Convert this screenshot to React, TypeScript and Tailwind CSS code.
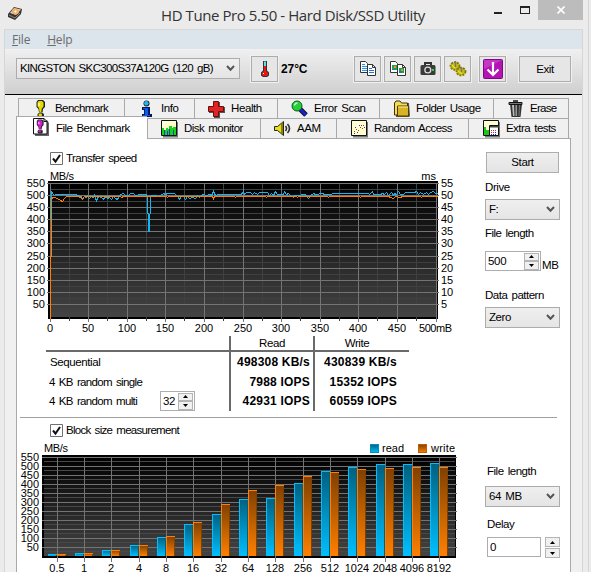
import type { ReactNode } from 'react'
import clsx from 'clsx'

const READ_LINE =
  '50,219 50,204 51,191 53,194 54,195 55,194 76,194 77,196 78,195 79,197 81,196 82,199 84,196 86,197 87,195 89,198 91,196 93,197 94,195 95,198 96,200 98,196 101,197 103,199 104,197 106,196 107,198 109,197 111,199 113,196 115,198 117,199 118,197 120,194 123,193 125,195 128,195 130,193 133,193 135,195 140,194 146,194 147,197 147,213 148,213 148,231 149,231 149,214 150,213 150,197 151,195 155,195 158,196 160,195 163,193 165,194 167,193 174,193 176,195 178,197 179,199 181,196 183,196 185,199 187,196 189,198 192,197 195,198 197,195 199,197 201,195 203,194 206,195 209,194 211,195 213,191 215,195 218,194 224,194 227,194 240,194 242,193 243,191 244,194 246,192 250,192 252,194 254,192 257,194 259,192 267,192 269,195 271,193 273,195 275,191 277,194 280,194 283,194 284,191 286,194 288,193 290,195 293,197 294,195 299,195 302,194 304,194 306,195 308,198 310,195 313,193 315,194 322,193 324,194 340,193 368,193 369,194 372,191 373,194 380,194 382,193 384,194 386,192 388,195 391,192 393,195 394,193 396,194 398,191 400,194 403,194 405,192 414,192 416,191 418,194 420,192 423,194 426,192 428,194 430,192 433,191 435,193 437,193'

const WRITE_LINE =
  '50,318 50,256 51,256 51,199 52,197 55,197 60,200 62,201 64,198 66,196 80,196 82,199 84,196 120,196 121,197 123,196 166,196 167,197 168,196 212,196 213,198 214,196 234,196 235,197 236,196 265,196 266,197 267,196 296,196 297,197 298,196 327,196 328,197 329,196 359,196 360,197 361,196 388,196 390,197 393,198 395,196 400,197 402,196 420,196 421,197 422,196 437,196'

const Y1 = [183, 195, 207, 219, 231, 243, 256, 268, 280, 292, 304]
const X1 = [50, 88, 127, 165, 204, 243, 281, 320, 358, 397, 436]

// [block size, x centre, top of the read bar, top of the write bar]
const BLOCKS: [string, number, number, number][] = [
  ['0.5', 57, 554, 554],
  ['1', 84, 553, 553],
  ['2', 111, 550, 550],
  ['4', 139, 545, 545],
  ['8', 166, 537, 536],
  ['16', 193, 524, 522],
  ['32', 221, 514, 504],
  ['64', 248, 499, 490],
  ['128', 275, 498, 485],
  ['256', 303, 483, 476],
  ['512', 330, 471, 472],
  ['1024', 357, 467, 469],
  ['2048', 385, 464, 468],
  ['4096', 412, 464, 467],
  ['8192', 439, 463, 467],
]

const RESULTS = [
  { label: 'Sequential', read: '498308 KB/s', write: '430839 KB/s' },
  { label: '4 KB random single', read: '7988 IOPS', write: '15352 IOPS' },
  { label: '4 KB random multi', read: '42931 IOPS', write: '60559 IOPS' },
]

function Icon({ children, size = 18 }: { children: ReactNode; size?: number }) {
  return (
    <svg width={size} height={size} viewBox="0 0 18 18" className="shrink-0">
      {children}
    </svg>
  )
}

function Bang({ color }: { color: string }) {
  return (
    <>
      <path d="M6 0h5l2 2v5l-2 2-.5 3.500H7L6.500 9l-2-2V2z" fill="#222" />
      <path d="M6.500 1H10l1.500 1.500v4l-1.700 2-.5 3.500H7.500L7 8 5.500 6.500v-4z" fill={color} />
      <path d="M6 3h2v3H6z" fill="#fff" opacity=".55" />
      <rect x="5.500" y="13" width="6.500" height="4.500" rx="1.800" fill="#222" />
      <rect x="6.500" y="13.500" width="3.500" height="2.500" rx="1" fill={color} />
    </>
  )
}

const icons = {
  benchmark: (
    <Icon>
      <Bang color="#e6dc00" />
    </Icon>
  ),
  info: (
    <Icon>
      <path d="M4 7h8v7h2v3H4v-3h2v-4H4z" fill="#001a55" />
      <path d="M5 8h5v7h2v1H5v-1h2V9H5V8z" fill="#0a5cf0" />
      <circle cx="8.500" cy="3.500" r="3" fill="#123" />
      <circle cx="8.300" cy="3.300" r="2.200" fill="#27b4e8" />
    </Icon>
  ),
  health: (
    <Icon>
      <path d="M6 2h6v5h5v6h-5v5H6v-5H1V7h5z" fill="#555" />
      <path d="M5.500 1.500h5v5h5v5h-5v5h-5v-5h-5v-5h5z" fill="#e02424" stroke="#6b0d0d" />
    </Icon>
  ),
  scan: (
    <Icon>
      <path d="M9 9l6 6" stroke="#111" strokeWidth="5" />
      <path d="M9 9l6 6" stroke="#1822d8" strokeWidth="3" />
      <circle cx="6" cy="6" r="5" fill="#25cf3c" stroke="#0c5c18" />
      <path d="M3.500 5.500a3 3 0 0 1 3-2.500" stroke="#baffc0" strokeWidth="1.500" fill="none" />
    </Icon>
  ),
  folder: (
    <Icon>
      <path d="M3 3h13l1 13-1 1H3z" fill="#555" />
      <path d="M1.500 15V3l1.500-2h4l1.500 2h6v12z" fill="#f7dc5c" stroke="#3d3200" />
      <path d="M4.500 6h11v10h-11z" fill="#d8b324" stroke="#4d3f00" />
      <path d="M5 7h10" stroke="#fff2a0" />
    </Icon>
  ),
  erase: (
    <Icon>
      <path d="M3 4h12l-1.500 13h-9z" fill="#333" />
      <path d="M5 5h2l.5 11H6z" fill="#bbb" />
      <path d="M8.500 5h1.500v11H8.500z" fill="#999" />
      <path d="M12 5h1l-.5 11h-1z" fill="#777" />
      <path d="M2 2.500h13v2H2z" fill="#777" stroke="#111" />
      <path d="M6 1h5" stroke="#111" strokeWidth="1.500" />
    </Icon>
  ),
  fileBench: (
    <Icon>
      <path d="M2 2h12l2 3v13H2z" fill="#666" />
      <path d="M.5.500h10.500l3 3v12.500H.5z" fill="#fff" stroke="#111" />
      <path d="M11 .500v3h3" fill="none" stroke="#111" />
      <g transform="translate(.2 1.500) scale(.8)">
        <Bang color="#d61ad6" />
      </g>
    </Icon>
  ),
  disk: (
    <Icon>
      <path d="M2 2h15v15.500H2z" fill="#777" />
      <path d="M.5.500h15v15H.5z" fill="#ffffcf" stroke="#111" />
      <path d="M1 8h2v2h2V8h2v1h1V6h3v2h1V7h3v8H1z" fill="#18d418" />
      <path d="M3 10h1v5H3zM6 11h1v4H6zM8 9h1v6H8zM12 10h1v5h-1z" fill="#2338d8" />
    </Icon>
  ),
  aam: (
    <Icon>
      <path d="M.5 6.500h3l6-5v14l-6-5h-3z" fill="#e8de19" stroke="#222" />
      <path d="M7 4v9l2 1.500V2z" fill="#8c8400" />
      <path d="M11.500 6q2 2.500 0 5M13.500 4q4 4.500 0 9" fill="none" stroke="#333" strokeWidth="1.600" />
    </Icon>
  ),
  random: (
    <Icon>
      <path d="M2 2h15v15.500H2z" fill="#777" />
      <path d="M.5.500h15v15H.5z" fill="#ffffcf" stroke="#111" />
      <path d="M3 11h1v1H3zM5 9h1v1H5zM7 10h1v1H7zM9 7h1v1H9zM11 8h1v1h-1zM12 5h1v1h-1z" fill="#e02222" />
      <path d="M3 13h1v1H3zM6 12h1v1H6zM8 5h1v1H8zM10 5h1v1h-1zM4 7h1v1H4zM13 7h1v1h-1z" fill="#2430d8" />
    </Icon>
  ),
  extra: (
    <Icon>
      <path d="M2 2h15v15.500H2z" fill="#777" />
      <path d="M.5.500h15v15H.5z" fill="#ffffcf" stroke="#111" />
      <path d="M1 7h2v3h3v5H1z" fill="#18c818" />
      <path d="M6.500 5.500h9v10h-9z" fill="#fff" stroke="#111" />
      <path d="M7 6h9v1.500H7z" fill="#444" />
      <path d="M8 10h1v1H8zM10 10h1v1h-1zM12 10h1v1h-1zM8 12h1v1H8zM10 12h1v1h-1z" fill="#d22" />
      <path d="M12 12h1v1h-1zM8 14h1v1H8zM10 14h1v1h-1zM12 14h1v1h-1z" fill="#22d" />
    </Icon>
  ),
  thermo: (
    <Icon>
      <path d="M7 1h4v9.500l2 2v3L11 17H7l-2-1.500v-3l2-2z" fill="#333" />
      <path d="M8 1.500h2V6H8z" fill="#5fe0ee" />
      <path d="M8 6h2v5l2 2v2l-1.500 1h-3L6 15v-2l2-2z" fill="#e81818" />
      <path d="M7 13h1v1H7z" fill="#fff" />
    </Icon>
  ),
  copy: (
    <Icon>
      <path d="M1.500 1.500h5l2 2v9h-7z" fill="#fff" stroke="#333" />
      <path d="M3 4.500h3M3 6.500h5M3 8.500h5M3 10.500h5" stroke="#2a96e8" />
      <path d="M8.500 4.500h5l3 3v8h-8z" fill="#fff" stroke="#333" />
      <path d="M13.500 4.500v3h3" fill="none" stroke="#333" />
      <path d="M10 8.500h3M10 10.500h5M10 12.500h5" stroke="#2a6fd8" />
    </Icon>
  ),
  copyImage: (
    <Icon>
      <path d="M1.500 1.500h5l2 2v9h-7z" fill="#fff" stroke="#333" />
      <path d="M3 5h5v5H3z" fill="#18a848" />
      <path d="M8.500 4.500h5l3 3v8h-8z" fill="#fff" stroke="#333" />
      <path d="M13.500 4.500v3h3" fill="none" stroke="#333" />
      <path d="M10 8h5v5h-5z" fill="#12a048" />
      <path d="M5 6h2v2H5zM12 9h2v2h-2z" fill="#ff8a1c" />
      <path d="M3 9h3v1H3zM10 11h2v2h-2z" fill="#1e6be0" />
    </Icon>
  ),
  camera: (
    <Icon>
      <path d="M6 5V3h6v2" fill="none" stroke="#333" strokeWidth="2" />
      <rect x="1.500" y="5" width="15" height="10" rx="1.500" fill="#3b3b3b" />
      <circle cx="8.800" cy="10" r="3.600" fill="#ddd" />
      <circle cx="8.800" cy="10" r="2.300" fill="#333" />
      <rect x="13" y="9" width="2" height="2" fill="#2fd83a" />
    </Icon>
  ),
  settings: (
    <Icon>
      <ellipse cx="6" cy="6" rx="4.500" ry="3.800" fill="#c9bd12" stroke="#827900" strokeWidth="1.800" strokeDasharray="2 1" />
      <ellipse cx="12" cy="11.500" rx="4.500" ry="3.800" fill="#c9bd12" stroke="#827900" strokeWidth="1.800" strokeDasharray="2 1" />
      <path d="M6.500 1v6M12.500 7v5" stroke="#777" strokeWidth="1.500" />
      <path d="M3 5l3 3M9 11l4 3" stroke="#f2e640" />
    </Icon>
  ),
}

function Chevron() {
  return (
    <svg width="9" height="7" viewBox="0 0 9 7" className="shrink-0">
      <path d="M1 1l3.500 3.700L8 1" fill="none" stroke="#555" strokeWidth="2" />
    </svg>
  )
}

function Select({ value, className }: { value: string; className?: string }) {
  return (
    <div
      className={clsx(
        'flex h-[21px] items-center justify-between border border-[#acacac] bg-linear-to-b from-[#efefef] to-[#e5e5e5] pl-[3px] pr-1',
        className,
      )}
    >
      <span>{value}</span>
      <Chevron />
    </div>
  )
}

function ArrowCell({ up }: { up?: boolean }) {
  return (
    <div className="flex flex-1 items-center justify-center border border-[#b4b4b4] bg-[#f0f0f0]">
      <svg width="5" height="3" viewBox="0 0 5 3">
        <path d={up ? 'M0 3L2.500 0L5 3z' : 'M0 0L2.500 3L5 0z'} fill="#000" />
      </svg>
    </div>
  )
}

function Spinner({ value, className }: { value: string; className?: string }) {
  return (
    <div className={clsx('flex h-5 items-center justify-between border border-[#abadb3] bg-white pl-0.5 pr-px', className)}>
      <span className="tracking-[-0.3px]">{value}</span>
      <div className="flex h-[17px] w-[15px] flex-col">
        <ArrowCell up />
        <ArrowCell />
      </div>
    </div>
  )
}

function Checkbox({ label, className }: { label: string; className?: string }) {
  return (
    <div className="flex h-[13px] items-center gap-[3px]">
      <svg width="13" height="13" viewBox="0 0 13 13">
        <path d="M.5.500h12v12H.5z" fill="#fff" stroke="#707070" />
        <path d="M3 6.500l2.500 3L10 3" fill="none" stroke="#111" strokeWidth="2" />
      </svg>
      <span className={className}>{label}</span>
    </div>
  )
}

function ToolButton({ children, className }: { children: ReactNode; className?: string }) {
  return (
    <div
      className={clsx(
        'flex h-[26px] items-center justify-center border border-[#adadad] bg-[#e6e6e6] shadow-[0_0_0_1px_#f0f0f0]',
        className,
      )}
    >
      {children}
    </div>
  )
}

function Tab({ icon, label, className }: { icon: ReactNode; label: string; className: string }) {
  return (
    <div className={clsx('flex h-5 items-center gap-[5px] border-l border-t border-[#a9a9a9] bg-[#f0f0f0]', className)}>
      {icon}
      <span>{label}</span>
    </div>
  )
}

function TransferChart() {
  return (
    <svg
      width="453"
      height="166"
      viewBox="17 170 453 166"
      className="block tracking-normal"
      fontSize="11"
      shapeRendering="crispEdges"
    >
      <defs>
        <linearGradient id="plot" x1="0" y1="0" x2="0" y2="1">
          <stop offset="0" stopColor="#000" />
          <stop offset="1" stopColor="#444" />
        </linearGradient>
      </defs>
      <text x="50" y="180" textLength="24">MB/s</text>
      <text x="436" y="180" textAnchor="end">ms</text>
      <rect x="48" y="181" width="390" height="138" fill="#000" />
      <rect x="50" y="183" width="387" height="134" fill="url(#plot)" />
      {Y1.map((y) => (
        <rect key={y} x="50" y={y + 6} width="387" height="1" fill="#404040" />
      ))}
      {X1.slice(0, -1).map((x) => (
        <rect key={x} x={x + 19} y="183" width="1" height="138" fill="#404040" />
      ))}
      {Y1.map((y, i) => (
        <g key={y}>
          <rect x="47" y={y} width="392" height="1" fill="#747474" />
          <text x="45" y={y + 4} textAnchor="end">{550 - i * 50}</text>
          <text x="441" y={y + 4}>{55 - i * 5}</text>
        </g>
      ))}
      {X1.slice(0, -1).map((x, i) => (
        <g key={x}>
          <rect x={x} y="183" width="1" height="139" fill="#747474" />
          <text x={x} y="332" textAnchor="middle">{i * 50}</text>
        </g>
      ))}
      <rect x="436" y="183" width="1" height="139" fill="#747474" />
      <text x="419" y="332" textLength="33">500mB</text>
      <g transform="translate(.5 .5)" fill="none">
        <polyline points={READ_LINE} stroke="#13b5f5" />
        <polyline points={WRITE_LINE} stroke="#ff8000" />
      </g>
    </svg>
  )
}

function Bar({ x, top, kind }: { x: number; top: number; kind: 'read' | 'write' }) {
  const read = kind === 'read'
  return (
    <>
      <rect x={x} y={top} width="9" height={556 - top} fill={read ? 'url(#read)' : 'url(#write)'} />
      <rect x={x} y={top} width="9" height="1" fill={read ? '#00bfff' : '#ff8000'} />
      <rect x={x} y={top} width="1" height={556 - top} fill={read ? '#00bfff' : '#ff8000'} />
      <rect x={x + 8} y={top + 1} width="1" height={555 - top} fill={read ? '#00607f' : '#7f4000'} />
    </>
  )
}

function BlockChart() {
  return (
    <svg
      width="453"
      height="134"
      viewBox="17 438 453 134"
      className="block tracking-normal"
      fontSize="11"
      shapeRendering="crispEdges"
    >
      <defs>
        <linearGradient id="read" x1="0" y1="0" x2="0" y2="1">
          <stop offset="0" stopColor="#00607f" />
          <stop offset="1" stopColor="#00bfff" />
        </linearGradient>
        <linearGradient id="write" x1="0" y1="0" x2="0" y2="1">
          <stop offset="0" stopColor="#7f4000" />
          <stop offset="1" stopColor="#ff8000" />
        </linearGradient>
      </defs>
      <text x="44" y="452" textLength="24">MB/s</text>
      <rect x="370.500" y="444.500" width="8" height="8" fill="url(#read)" stroke="#0090c0" />
      <text x="382" y="452" textLength="22">read</text>
      <rect x="418.500" y="444.500" width="8" height="8" fill="url(#write)" stroke="#c06000" />
      <text x="431" y="452" textLength="24">write</text>
      <rect x="42" y="455" width="414" height="103" fill="#000" />
      <rect x="44" y="457" width="411" height="99" fill="url(#plot)" />
      {Y1.map((_, i) => (
        <g key={i}>
          <rect x="44" y={461 + i * 9} width="411" height="1" fill="#484848" />
          <rect x="42" y={457 + i * 9} width="415" height="1" fill="#747474" />
          <text x="39" y={461 + i * 9} textAnchor="end">{550 - i * 50}</text>
        </g>
      ))}
      {BLOCKS.map(([size, x, read, write]) => (
        <g key={size}>
          <rect x={x} y="457" width="1" height="105" fill="#747474" />
          <Bar x={x - 9} top={read} kind="read" />
          <Bar x={x} top={write} kind="write" />
          <text x={x} y="572" textAnchor="middle">{size}</text>
        </g>
      ))}
    </svg>
  )
}

function TitleBar() {
  return (
    <div className="flex h-[29px] items-start">
      <svg width="16" height="16" viewBox="0 0 16 16" className="ml-[7px] mt-[6px]">
        <path d="M1 8L7 1l8 2-1 5-6 6-7-3z" fill="#383430" />
        <path d="M3 7l4-5 7 1.500L9 9z" fill="#dcd0b8" />
        <ellipse cx="8.500" cy="5.500" rx="3.500" ry="3" fill="#f0b468" />
        <circle cx="8.500" cy="5.500" r="1" fill="#fff" />
        <path d="M2 9l6 3 5-5" stroke="#888" fill="none" />
      </svg>
      <span className="ml-[138px] mt-[3px] w-[333px] whitespace-nowrap font-['Open_Sans',sans-serif] text-[15px] leading-6 tracking-[-0.42px] text-[#333] [word-spacing:0]">
        HD Tune Pro 5.50 - Hard Disk/SSD Utility
      </span>
      <div className="mt-3 h-0.5 w-2 bg-[#222]" />
      <div className="ml-[18px] mt-1.5 h-2 w-[10px] border border-t-2 border-[#222]" />
      <div className="ml-[8px] flex h-5 w-[45px] items-center justify-center bg-[#bcbcbc]">
        <svg width="8" height="8" viewBox="0 0 8 8">
          <path d="M.5.500l7 7M7.500.500l-7 7" stroke="#fff" strokeWidth="1.600" />
        </svg>
      </div>
    </div>
  )
}

function Toolbar() {
  return (
    <div className="flex h-[46px] items-start border-b border-black bg-linear-to-b from-[#f0f0f0] to-[#cfcfcf] pt-[7px]">
      <Select value="KINGSTON SKC300S37A120G (120 gB)" className="ml-[11px] mt-0.5 w-[224px] tracking-[-0.66px]" />
      <ToolButton className="ml-[11px] w-[27px]">{icons.thermo}</ToolButton>
      <span className="ml-[3px] w-[73px] text-[12px] font-bold leading-[26px] tracking-[-0.1px]">27°C</span>
      <div className="flex gap-[3px]">
        <ToolButton className="w-[27px]">{icons.copy}</ToolButton>
        <ToolButton className="w-[27px]">{icons.copyImage}</ToolButton>
        <ToolButton className="w-[27px]">{icons.camera}</ToolButton>
        <ToolButton className="w-[27px]">{icons.settings}</ToolButton>
      </div>
      <ToolButton className="ml-2 w-[27px]">
        <svg width="20" height="20" viewBox="0 0 20 20">
          <rect x=".5" y=".5" width="19" height="19" rx="1" fill="#b414b4" stroke="#7a0a80" />
          <path d="M1 1h18L1 10z" fill="#d34bd3" opacity=".6" />
          <path d="M10 3v12M4.500 10.500L10 16l5.500-5.500" fill="none" stroke="#fff" strokeWidth="2.200" />
        </svg>
      </ToolButton>
      <ToolButton className="ml-[13px] w-[52px]">Exit</ToolButton>
    </div>
  )
}

function Tabs() {
  return (
    <div className="pt-[3px]">
      <div className="ml-[13px] flex w-[551px] border-r border-[#a9a9a9]">
        <Tab icon={icons.benchmark} label="Benchmark" className="w-[106px] pl-[13px] tracking-[-0.55px]" />
        <Tab icon={icons.info} label="Info" className="w-[70px] pl-[13px]" />
        <Tab icon={icons.health} label="Health" className="w-[83px] pl-[13px]" />
        <Tab icon={icons.scan} label="Error Scan" className="w-[102px] pl-[13px] tracking-[-0.5px]" />
        <Tab icon={icons.folder} label="Folder Usage" className="w-[114px] pl-[13px] tracking-[-0.5px]" />
        <Tab icon={icons.erase} label="Erase" className="w-[75px] pl-[13px] tracking-[-0.7px]" />
      </div>
      <div className="ml-[11px] flex w-[553px] items-end border-r border-[#a9a9a9]">
        <div className="z-10 -mb-px -mt-0.5 flex h-[23px] w-[131px] gap-[5px] border-l border-t border-[#a9a9a9] bg-white pl-4 pt-px tracking-[-0.55px]">
          {icons.fileBench}
          <span className="leading-5">File Benchmark</span>
        </div>
        <Tab icon={icons.disk} label="Disk monitor" className="w-[113px] pl-[13px] tracking-[-0.55px]" />
        <Tab icon={icons.aam} label="AAM" className="w-[76px] pl-[13px]" />
        <Tab icon={icons.random} label="Random Access" className="w-[132px] pl-[14px] tracking-[-0.5px]" />
        <Tab icon={icons.extra} label="Extra tests" className="w-[100px] pl-[14px] tracking-[-0.55px]" />
      </div>
    </div>
  )
}

function Results() {
  return (
    <div className="ml-[29px] w-[363px]">
      <div className="grid h-4 grid-cols-[183px_84px_96px] border-b-2 border-[#6a6a6a] text-center leading-[14px]">
        <span />
        <span className="border-l-2 border-[#6a6a6a]">Read</span>
        <span className="border-l-2 border-[#6a6a6a] pr-2.5">Write</span>
      </div>
      {RESULTS.map((row, i) => (
        <div key={row.label} className="grid h-[19.600px] grid-cols-[183px_84px_96px] leading-[20px]">
          <div className="flex items-center pl-[3px]">
            <span className={clsx('w-[111px]', i === 0 ? 'pl-px tracking-[-0.4px]' : 'tracking-[-0.65px]')}>{row.label}</span>
            {i === 2 && <Spinner value="32" className="w-[35px]" />}
          </div>
          <b className="border-l-2 border-[#6a6a6a] pr-[3px] text-right text-[12px] tracking-[0.2px] [word-spacing:0]">{row.read}</b>
          <b className="border-l-2 border-[#6a6a6a] pr-[12px] text-right text-[12px] tracking-[0.2px] [word-spacing:0]">{row.write}</b>
        </div>
      ))}
    </div>
  )
}

export default function App() {
  return (
    <div className="h-[572px] w-[591px] overflow-hidden bg-[#ebebeb] font-['Liberation_Sans',Arial,sans-serif] text-[11.5px] leading-[13px] tracking-[-0.4px] text-black [word-spacing:1.500px]">
      <div className="h-full w-[589px] border-r border-[#d4d4d4]">
        <TitleBar />
        <div className="ml-1 h-[543px] w-[579px] border-x border-t border-[#d6d6d6] bg-[#f0f0f0]">
          <div className="flex h-[19px] items-center gap-[17px] bg-[#dce4ec] pl-[7px] font-['Open_Sans',sans-serif] text-[12px] tracking-[-0.2px] text-[#6d6d6d]">
            <span><u>F</u>ile</span>
            <span><u>H</u>elp</span>
          </div>
          <Toolbar />
          <Tabs />
          <div className="ml-[11px] flex h-[434px] w-[555px] flex-col border-x border-t border-[#a9a9a9] bg-white">
            <div className="flex h-[279px]">
              <div className="w-[453px]">
                <div className="ml-[33px] h-[31px] pt-[13px]">
                  <Checkbox label="Transfer speed" className="tracking-[-0.55px]" />
                </div>
                <TransferChart />
                <Results />
              </div>
              <div className="ml-[15px] w-[80px]">
                <div className="ml-px mt-[13px] flex h-[21px] w-[73px] items-center justify-center border border-[#adadad] bg-linear-to-b from-[#efefef] to-[#e4e4e4]">
                  Start
                </div>
                <div className="mt-2">Drive</div>
                <Select value="F:" className="mt-[5px] w-[75px]" />
                <div className="mt-[7px] tracking-[-0.55px]">File length</div>
                <div className="mt-[11px] flex items-end gap-px">
                  <Spinner value="500" className="w-[56px]" />
                  <span className="-mb-px">MB</span>
                </div>
                <div className="mt-[18px] tracking-[-0.5px]">Data pattern</div>
                <Select value="Zero" className="mt-[5px] w-[75px]" />
              </div>
            </div>
            <div className="ml-[3px] h-px w-[537px] shrink-0 bg-[#a0a0a0]" />
            <div className="flex">
              <div className="w-[453px]">
                <div className="ml-[33px] h-[20px] pt-[6px]">
                  <Checkbox label="Block size measurement" className="tracking-[-0.7px]" />
                </div>
                <BlockChart />
              </div>
              <div className="ml-[15px] pt-[47px]">
                <div className="ml-0.5 tracking-[-0.5px]">File length</div>
                <Select value="64 MB" className="mt-[8px] w-[75px]" />
                <div className="ml-0.5 mt-[11px]">Delay</div>
                <div className="ml-0.5 mt-[6px] flex gap-1">
                  <div className="h-5 w-[54px] border border-[#abadb3] bg-white pl-0.5 leading-[18px]">0</div>
                  <div className="flex h-[21px] w-[15px] flex-col gap-px">
                    <ArrowCell up />
                    <ArrowCell />
                  </div>
                </div>
              </div>
            </div>
          </div>
        </div>
      </div>
    </div>
  )
}
